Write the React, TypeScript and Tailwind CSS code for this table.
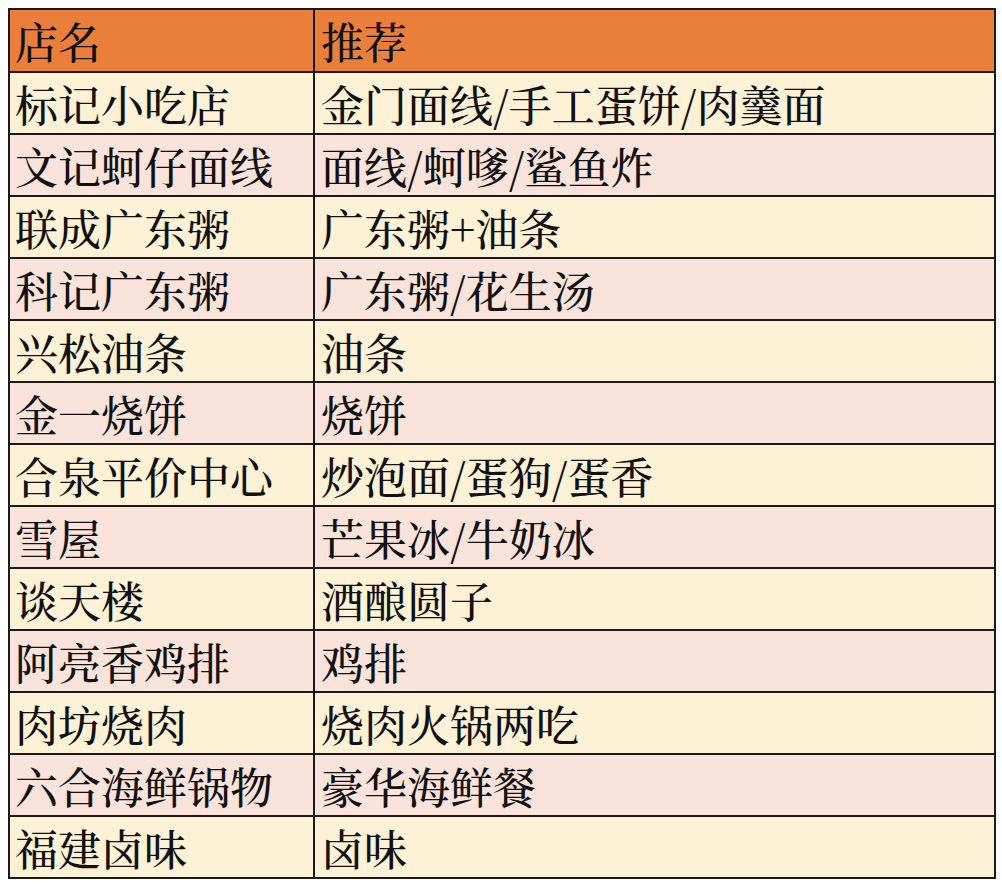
const rows: [string, string][] = [
  ["标记小吃店", "金门面线/手工蛋饼/肉羹面"],
  ["文记蚵仔面线", "面线/蚵嗲/鲨鱼炸"],
  ["联成广东粥", "广东粥+油条"],
  ["科记广东粥", "广东粥/花生汤"],
  ["兴松油条", "油条"],
  ["金一烧饼", "烧饼"],
  ["合泉平价中心", "炒泡面/蛋狗/蛋香"],
  ["雪屋", "芒果冰/牛奶冰"],
  ["谈天楼", "酒酿圆子"],
  ["阿亮香鸡排", "鸡排"],
  ["肉坊烧肉", "烧肉火锅两吃"],
  ["六合海鲜锅物", "豪华海鲜餐"],
  ["福建卤味", "卤味"],
];

export default function App() {
  return (
    <div className="h-[886px] w-[1002px] bg-white pl-[8px] pt-[8px] font-['Noto_Serif_CJK_SC','Liberation_Serif','Noto_Sans_CJK_SC',serif] text-[43px] font-medium leading-none text-[#111]">
      <div className="w-[988px] border-2 border-[#1a1a1a]">
        <div className="grid h-[61px] grid-cols-[305px_1fr] bg-[#e97f3b]">
          <div className="flex items-center border-r-2 border-[#1a1a1a] pl-[5px]">店名</div>
          <div className="flex items-center pl-[6px]">推荐</div>
        </div>
        {rows.map(([name, dish], i) => (
          <div
            key={name}
            className={`grid h-[62px] grid-cols-[305px_1fr] border-t-2 border-[#1a1a1a] ${
              i % 2 === 0 ? "bg-[#fdf1d6]" : "bg-[#f9e3da]"
            }`}
          >
            <div className="flex items-center border-r-2 border-[#1a1a1a] pl-[5px]">{name}</div>
            <div className="flex items-center pl-[6px]">{dish}</div>
          </div>
        ))}
      </div>
    </div>
  );
}
